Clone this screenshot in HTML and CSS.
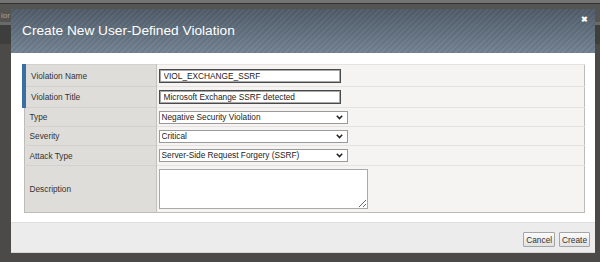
FILE: index.html
```html
<!DOCTYPE html>
<html lang="en">
<head>
    <meta charset="UTF-8">
    <meta name="viewport" content="width=device-width, initial-scale=1.0">
    <title>Create New User-Defined Violation</title>
    <link rel="stylesheet" href="styles.css">
</head>
<body>
    <!-- Page behind the overlay -->
    <div class="page">
        <div class="page-topbar"></div>
        <div class="page-tabs"><span class="page-title">ior</span></div>
        <div class="page-toolbar"></div>
    </div>

    <!-- Dialog -->
    <div class="dialog">
        <div class="dialog-header">
            <h1>Create New User-Defined Violation</h1>
            <span class="close">&#10006;</span>
        </div>

        <div class="dialog-body">
            <table class="form-table">
                <colgroup>
                    <col class="label-col">
                    <col>
                </colgroup>
                <tr class="row-name">
                    <td class="label required">Violation Name</td>
                    <td class="value"><input type="text" class="text-input" value="VIOL_EXCHANGE_SSRF"></td>
                </tr>
                <tr class="row-title">
                    <td class="label required">Violation Title</td>
                    <td class="value"><input type="text" class="text-input" value="Microsoft Exchange SSRF detected"></td>
                </tr>
                <tr class="row-type">
                    <td class="label">Type</td>
                    <td class="value">
                        <span class="select-wrap">
                            <select class="select">
                                <option>Negative Security Violation</option>
                            </select>
                            <svg class="chevron" width="7" height="5" viewBox="0 0 7 5"><path d="M0.8 0.8 L3.5 3.6 L6.2 0.8" fill="none" stroke="#222" stroke-width="1.5"/></svg>
                        </span>
                    </td>
                </tr>
                <tr class="row-severity">
                    <td class="label">Severity</td>
                    <td class="value">
                        <span class="select-wrap">
                            <select class="select">
                                <option>Critical</option>
                            </select>
                            <svg class="chevron" width="7" height="5" viewBox="0 0 7 5"><path d="M0.8 0.8 L3.5 3.6 L6.2 0.8" fill="none" stroke="#222" stroke-width="1.5"/></svg>
                        </span>
                    </td>
                </tr>
                <tr class="row-attack">
                    <td class="label">Attack Type</td>
                    <td class="value">
                        <span class="select-wrap">
                            <select class="select">
                                <option>Server-Side Request Forgery (SSRF)</option>
                            </select>
                            <svg class="chevron" width="7" height="5" viewBox="0 0 7 5"><path d="M0.8 0.8 L3.5 3.6 L6.2 0.8" fill="none" stroke="#222" stroke-width="1.5"/></svg>
                        </span>
                    </td>
                </tr>
                <tr class="row-desc">
                    <td class="label">Description</td>
                    <td class="value"><textarea class="textarea"></textarea></td>
                </tr>
            </table>
        </div>

        <div class="dialog-footer">
            <button class="btn">Cancel</button>
            <button class="btn">Create</button>
        </div>
    </div>
</body>
</html>
```

FILE: styles.css
```css
html, body {
    margin: 0;
    padding: 0;
}
body {
    width: 600px;
    height: 262px;
    overflow: hidden;
    background-color: #4b4a48;
    font-family: "Liberation Sans", Arial, sans-serif;
    position: relative;
}

/* page behind the overlay */
.page-topbar {
    height: 3px;
    background-color: #737373;
    border-bottom: 1px solid #333;
}
.page-tabs {
    height: 18px;
    background-color: #545452;
    border-bottom: 3px solid #6a6a68;
    overflow: hidden;
}
.page-title {
    display: inline-block;
    margin-left: 1px;
    margin-top: 4px;
    font-size: 8px;
    color: #a3a3a3;
}
.page-toolbar {
    height: 19px;
    background-color: #3e3e3d;
}

/* dialog */
.dialog {
    position: absolute;
    left: 11px;
    top: 9px;
    width: 584px;
    height: 244px;
    background-color: #fff;
    display: flex;
    flex-direction: column;
}
.dialog-header {
    height: 44px;
    flex: none;
    display: flex;
    align-items: center;
    justify-content: space-between;
    padding: 0 6px 0 11px;
    background-image:
        repeating-linear-gradient(135deg, rgba(255, 255, 255, 0.035) 0 2px, rgba(0, 0, 0, 0.03) 2px 4px),
        linear-gradient(#4f5b68, #728292);
}
.dialog-header h1 {
    margin: 0 0 1px 0;
    font-size: 13.7px;
    font-weight: normal;
    color: #fff;
}
.close {
    align-self: flex-start;
    margin-top: 6px;
    margin-right: 1px;
    font-size: 7.5px;
    font-weight: bold;
    color: #fff;
}

.dialog-body {
    flex: 1;
    padding: 11px 10px 0 11px;
}

.form-table {
    width: 563px;
    table-layout: fixed;
    border-collapse: collapse;
    border: 1px solid #bdbcb9;
    font-size: 8.3px;
    color: #333;
}
.label-col {
    width: 132px;
}
.form-table td {
    padding: 0;
    border-top: 1px solid #d2d1ce;
}
.form-table .label {
    background-color: #dfddd9;
    padding-left: 5px;
    border-right: 1px solid #c4c3c0;
}
.form-table .label.required {
    border-left: 4px solid #3b6ea3;
}
.form-table .value {
    background-color: #f5f4f2;
    padding-left: 2px;
    border-top-color: #e4e3e1;
}
.row-name td { height: 21px; }
.row-title td { height: 20px; }
.row-type td { height: 18px; }
.row-severity td { height: 18px; }
.row-attack td { height: 19px; }
.row-desc td { height: 46px; }

.text-input {
    display: block;
    box-sizing: border-box;
    width: 182px;
    height: 14px;
    margin: 0;
    padding: 0 0 0 4px;
    border: 1px solid #4a4a4a;
    box-shadow: inset 0 0 0 1px #a8a8a8;
    font-family: inherit;
    font-size: 8.3px;
    color: #222;
    background-color: #fff;
    outline: none;
}

.select-wrap {
    position: relative;
    display: block;
    width: 189px;
}
.select {
    display: block;
    box-sizing: border-box;
    width: 189px;
    height: 13px;
    margin: 0;
    padding: 0 0 0 2px;
    border: 1px solid #9a9a9a;
    border-radius: 0;
    background-color: #fff;
    -webkit-appearance: none;
    appearance: none;
    font-family: inherit;
    font-size: 8.3px;
    line-height: 11px;
    color: #222;
}
.chevron {
    position: absolute;
    right: 5px;
    top: 4px;
}

.textarea {
    display: block;
    box-sizing: border-box;
    width: 209px;
    height: 40px;
    margin: 0;
    border: 1px solid #a9a9a9;
    background-color: #fff;
    font-family: inherit;
    font-size: 8.3px;
}

.dialog-footer {
    height: 31px;
    flex: none;
    box-sizing: border-box;
    display: flex;
    justify-content: flex-end;
    align-items: flex-start;
    gap: 4px;
    padding: 9px 5px 0 0;
    background-color: #ececec;
    border-top: 1px solid #e0e0e0;
    border-bottom: 1px solid #d6d6d6;
}
.btn {
    box-sizing: border-box;
    height: 15px;
    margin: 0;
    padding: 0 2px;
    border: 1px solid #a5a5a5;
    border-radius: 1px;
    background: linear-gradient(#fbfbfb, #e2e2e2);
    font-family: inherit;
    font-size: 8.3px;
    color: #333;
    cursor: pointer;
}
.btn:hover {
    background: #f0f0f0;
}
```
